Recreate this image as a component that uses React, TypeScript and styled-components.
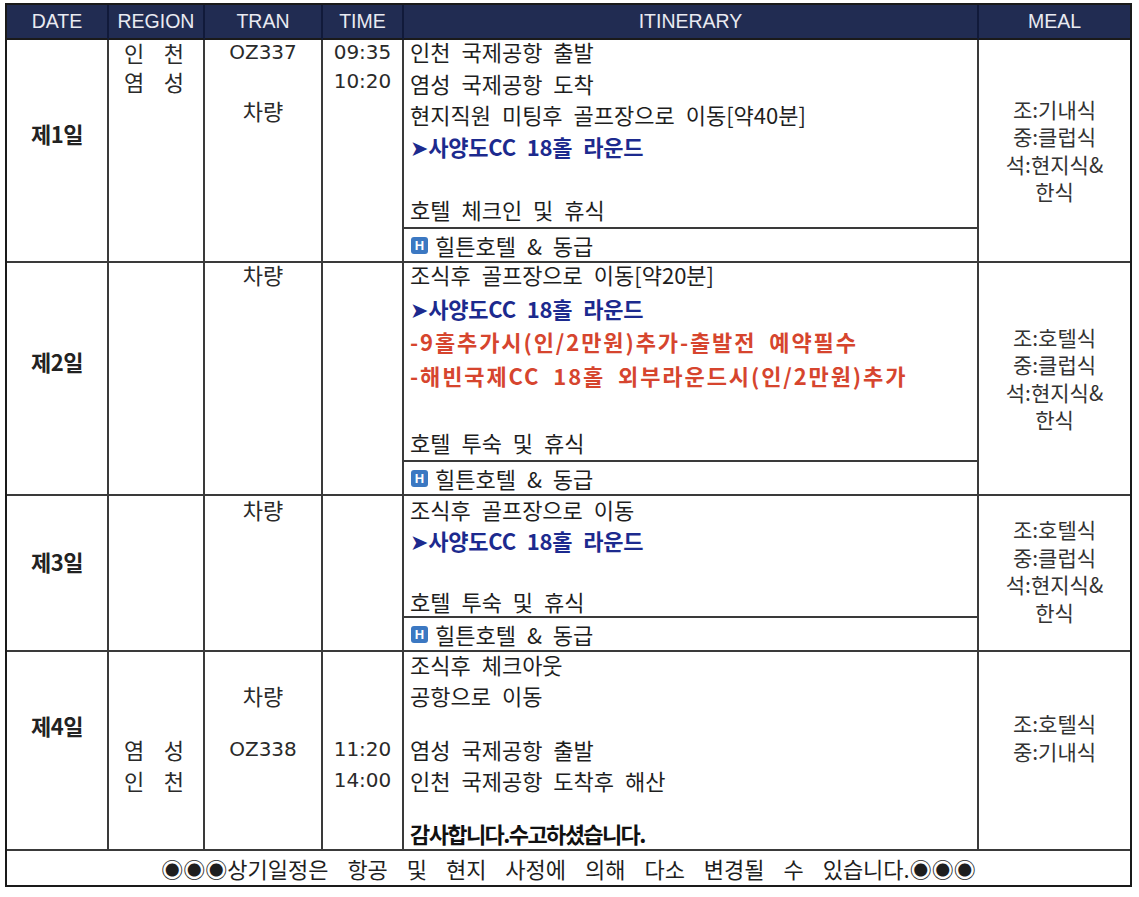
import React from "react"
import styled, { createGlobalStyle } from "styled-components"

type Tone = "plain" | "blue" | "red" | "bold"

interface ItinLine {
    text: string
    tone?: Tone
}

interface Day {
    label: string
    lineHeight: number
    blank?: number
    lift: number
    stackLh?: number
    stackLift?: number
    region: string[]
    tran: string[]
    time: string[]
    itinerary: ItinLine[]
    hotel?: string
    meals: string[]
    dateShift: number
    mealShift: number
}

const days: Day[] = [
    {
        label: "제1일",
        lineHeight: 31.5,
        lift: -4,
        stackLh: 29,
        stackLift: -2,
        region: ["인 천", "염 성"],
        tran: ["OZ337", "", "차량"],
        time: ["09:35", "10:20"],
        itinerary: [
            { text: "인천 국제공항 출발" },
            { text: "염성 국제공항 도착" },
            { text: "현지직원 미팅후 골프장으로 이동[약40분]" },
            { text: "➤사양도CC 18홀 라운드", tone: "blue" },
            { text: "" },
            { text: "호텔 체크인 및 휴식" },
        ],
        hotel: "힐튼호텔 & 동급",
        meals: ["조:기내식", "중:클럽식", "석:현지식&", "한식"],
        dateShift: 36,
        mealShift: 0,
    },
    {
        label: "제2일",
        lineHeight: 33.5,
        lift: -5,
        region: [],
        tran: ["차량"],
        time: [],
        itinerary: [
            { text: "조식후 골프장으로 이동[약20분]" },
            { text: "➤사양도CC 18홀 라운드", tone: "blue" },
            { text: "-9홀추가시(인/2만원)추가-출발전 예약필수", tone: "red" },
            { text: "-해빈국제CC 18홀 외부라운드시(인/2만원)추가", tone: "red" },
            { text: "" },
            { text: "호텔 투숙 및 휴식" },
        ],
        hotel: "힐튼호텔 & 동급",
        meals: ["조:호텔식", "중:클럽식", "석:현지식&", "한식"],
        dateShift: 36,
        mealShift: 0,
    },
    {
        label: "제3일",
        lineHeight: 30.5,
        lift: -2,
        region: [],
        tran: ["차량"],
        time: [],
        itinerary: [
            { text: "조식후 골프장으로 이동" },
            { text: "➤사양도CC 18홀 라운드", tone: "blue" },
            { text: "" },
            { text: "호텔 투숙 및 휴식" },
        ],
        hotel: "힐튼호텔 & 동급",
        meals: ["조:호텔식", "중:클럽식", "석:현지식&", "한식"],
        dateShift: 24,
        mealShift: 4,
    },
    {
        label: "제4일",
        lineHeight: 31,
        blank: 22.5,
        lift: -3,
        region: ["", "", "", "염 성", "인 천"],
        tran: ["", "차량", "", "OZ338"],
        time: ["", "", "", "11:20", "14:00"],
        itinerary: [
            { text: "조식후 체크아웃" },
            { text: "공항으로 이동" },
            { text: "" },
            { text: "염성 국제공항 출발" },
            { text: "인천 국제공항 도착후 해산" },
            { text: "" },
            { text: "감사합니다.수고하셨습니다.", tone: "bold" },
        ],
        meals: ["조:호텔식", "중:기내식"],
        dateShift: 52,
        mealShift: 26,
    },
]

const heads = ["DATE", "REGION", "TRAN", "TIME", "ITINERARY", "MEAL"]

const hangul = /[가-힣]/

// 줄 높이: 빈 줄은 blank 높이를 쓴다
function lineHeights(d: Day): number[] {
    return d.itinerary.map(l => (l.text ? d.lineHeight : d.blank ?? d.lineHeight))
}

const GlobalStyle = createGlobalStyle`
    html, body {
        margin: 0;
        padding: 0;
        background: #fff;
    }
    body {
        font-family: "Noto Sans CJK KR", "DejaVu Sans", sans-serif;
        color: #1e1e1e;
    }
`

const Sheet = styled.div`
    display: grid;
    grid-template-columns: 102px 96px 118px 81px 575px 151px;
    grid-template-rows: 35px 223px 233px 156px 199px 34px;
    width: 1127px;
    box-sizing: border-box;
    margin: 3px 0 0 5px;
    border: 2px solid #1a1a1a;
    font-size: 22px;
`

const HeadCell = styled.div<{ $last?: boolean }>`
    display: flex;
    align-items: center;
    justify-content: center;
    box-sizing: border-box;
    background: #212c52;
    color: #e9eaf1;
    font-family: "Liberation Sans", sans-serif;
    font-size: 19.5px;
    border-right: ${p => (p.$last ? "none" : "2px solid #111a3a")};
    border-bottom: 2px solid #1a1a1a;
`

const Cell = styled.div<{ $last?: boolean }>`
    box-sizing: border-box;
    border-right: ${p => (p.$last ? "none" : "2px solid #3a3a3a")};
    border-bottom: 2px solid #3a3a3a;
    min-width: 0;
`

const DateCell = styled(Cell)<{ $shift: number }>`
    display: flex;
    align-items: center;
    justify-content: center;
    padding-bottom: ${p => p.$shift}px;
    font-weight: 700;
    font-size: 22px;
    letter-spacing: -0.5px;
    color: #222;
`

const StackCell = styled(Cell)`
    text-align: center;
    color: #2a2a2a;
`

const StackInner = styled.div<{ $lift: number }>`
    margin-top: ${p => p.$lift}px;
`

const LineBox = styled.div<{ $h: number }>`
    height: ${p => p.$h}px;
    line-height: ${p => p.$h}px;
`

const StackLine = styled(LineBox)<{ $ko: boolean }>`
    font-family: ${p => (p.$ko ? `"Noto Sans CJK KR", sans-serif` : `"DejaVu Sans", sans-serif`)};
    font-size: ${p => (p.$ko ? 22 : 20)}px;
`

const RegionLine = styled.div`
    display: flex;
    justify-content: space-between;
    padding: 0 19px 0 15px;
`

const ItinCell = styled(Cell)`
    display: flex;
    flex-direction: column;
`

const ItinBody = styled.div<{ $lift: number }>`
    flex: 1;
    margin-top: ${p => p.$lift}px;
    padding: 0 6px;
    word-spacing: 6px;
    white-space: nowrap;
`

const toneColor: Record<Tone, string> = {
    plain: "#1e1e1e",
    blue: "#1c2a8e",
    red: "#d6452e",
    bold: "#111",
}

const toneSpacing: Record<Tone, string> = {
    plain: "0",
    blue: "-0.2px",
    red: "1.9px",
    bold: "-1.6px",
}

const Line = styled(LineBox)<{ $tone: Tone }>`
    color: ${p => toneColor[p.$tone]};
    font-weight: ${p => (p.$tone === "plain" ? 400 : 700)};
    letter-spacing: ${p => toneSpacing[p.$tone]};
`

const HotelBar = styled.div`
    display: flex;
    flex-shrink: 0;
    align-items: center;
    gap: 7px;
    height: 34px;
    box-sizing: border-box;
    padding-left: 7px;
    border-top: 2px solid #3a3a3a;
    word-spacing: 6px;
`

const HotelMark = styled.span`
    display: inline-flex;
    align-items: center;
    justify-content: center;
    width: 17px;
    height: 17px;
    border-radius: 3px;
    background: #3b78c2;
    color: #fff;
    font-family: "Liberation Sans", sans-serif;
    font-weight: 700;
    font-size: 13px;
    line-height: 1;
`

const MealCell = styled(Cell)<{ $shift: number }>`
    display: flex;
    flex-direction: column;
    align-items: center;
    justify-content: center;
    padding-bottom: ${p => p.$shift}px;
    line-height: 27.5px;
    color: #333;
    font-size: 21px;
`

const Footer = styled.div`
    grid-column: 1 / -1;
    display: flex;
    align-items: center;
    justify-content: center;
    word-spacing: 14px;
    color: #1e1e1e;
`

const blank = "\u00a0"

function Stack({ lines, heights, lift, region }: { lines: string[]; heights: number[]; lift: number; region?: boolean }) {
    return (
        <StackCell>
            <StackInner $lift={lift}>
                {lines.map((l, i) => {
                    const h = heights[i] ?? heights[0]
                    if (region && l) {
                        const [a, b] = l.split(" ")
                        return (
                            <StackLine key={i} $h={h} $ko>
                                <RegionLine>
                                    <span>{a}</span>
                                    <span>{b}</span>
                                </RegionLine>
                            </StackLine>
                        )
                    }
                    return (
                        <StackLine key={i} $h={h} $ko={hangul.test(l)}>
                            {l || blank}
                        </StackLine>
                    )
                })}
            </StackInner>
        </StackCell>
    )
}

export default function App() {
    return (
        <>
            <GlobalStyle />
            <Sheet>
                {heads.map((h, i) => (
                    <HeadCell key={h} $last={i === heads.length - 1}>
                        {h}
                    </HeadCell>
                ))}
                {days.map(d => {
                    const hs = lineHeights(d)
                    const stackHs = d.stackLh ? hs.map(() => d.stackLh as number) : hs
                    const stackLift = d.stackLift ?? d.lift
                    return (
                        <React.Fragment key={d.label}>
                            <DateCell $shift={d.dateShift}>{d.label}</DateCell>
                            <Stack lines={d.region} heights={stackHs} lift={stackLift} region />
                            <Stack lines={d.tran} heights={stackHs} lift={stackLift} />
                            <Stack lines={d.time} heights={stackHs} lift={stackLift} />
                            <ItinCell>
                                <ItinBody $lift={d.lift}>
                                    {d.itinerary.map((l, i) => (
                                        <Line key={i} $h={hs[i]} $tone={l.tone ?? "plain"}>
                                            {l.text || blank}
                                        </Line>
                                    ))}
                                </ItinBody>
                                {d.hotel && (
                                    <HotelBar>
                                        <HotelMark>H</HotelMark>
                                        <span>{d.hotel}</span>
                                    </HotelBar>
                                )}
                            </ItinCell>
                            <MealCell $last $shift={d.mealShift}>
                                {d.meals.map(m => (
                                    <div key={m}>{m}</div>
                                ))}
                            </MealCell>
                        </React.Fragment>
                    )
                })}
                <Footer>◉◉◉상기일정은 항공 및 현지 사정에 의해 다소 변경될 수 있습니다.◉◉◉</Footer>
            </Sheet>
        </>
    )
}
